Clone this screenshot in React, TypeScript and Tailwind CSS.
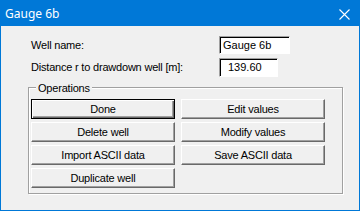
import * as React from "react";

const font = { fontFamily: '"Liberation Sans", Arial, sans-serif' };

function Btn({ label, isDefault = false }: { label: string; isDefault?: boolean }) {
  return (
    <button
      className={
        isDefault
          ? "h-[20px] border border-black bg-[#f0f0f0] text-[11px] tracking-[-0.2px] text-black shadow-[inset_1px_1px_0_#fff,inset_-1px_-1px_0_#696969,inset_-2px_-2px_0_#a0a0a0]"
          : "h-[20px] border border-t-white border-l-white border-r-[#696969] border-b-[#696969] bg-[#f0f0f0] text-[11px] tracking-[-0.2px] text-black shadow-[inset_-1px_-1px_0_#a0a0a0]"
      }
    >
      {label}
    </button>
  );
}

function Field({ value, width, height, indent }: { value: string; width: string; height: string; indent: string }) {
  return (
    <div
      className={`${width} ${height} ${indent} flex items-center border border-t-[#a0a0a0] border-l-[#a0a0a0] border-r-white border-b-white bg-white text-[11px] text-black shadow-[inset_1px_1px_0_#000]`}
    >
      {value}
    </div>
  );
}

export default function App() {
  return (
    <div className="h-[212px] w-[361px] bg-white" style={font}>
      <div className="flex h-[211px] w-[360px] flex-col border border-[#0078d7] bg-[#f0f0f0]">
        <div className="flex h-[25px] shrink-0 items-center justify-between bg-[#0078d7] pl-[4px] pr-[9px]">
          <span className="text-[12px] text-white" style={{ fontFamily: '"Noto Sans", "Open Sans", sans-serif' }}>
            Gauge 6b
          </span>
          <svg width="11" height="11" viewBox="0 0 11 11" className="mt-[1px]">
            <path d="M0.5 0.5 L10.5 10.5 M10.5 0.5 L0.5 10.5" stroke="#fff" strokeWidth="1.1" fill="none" />
          </svg>
        </div>

        <div className="flex flex-col pt-[10px] pl-[27px]">
          <div className="flex h-[18px] items-center">
            <span className="w-[191px] pl-[3px] text-[11px] tracking-[-0.2px] text-black">Well name:</span>
            <Field value="Gauge 6b" width="w-[71px]" height="h-[18px]" indent="pl-[3px]" />
          </div>
          <div className="mt-[4px] flex h-[19px] items-center">
            <span className="w-[191px] pl-[3px] text-[11px] tracking-[-0.2px] text-black">
              Distance r to drawdown well [m]:
            </span>
            <Field value="139.60" width="w-[59px]" height="h-[19px]" indent="pl-[8px]" />
          </div>

          <div className="relative mt-[10px] w-[315px] border border-[#a0a0a0] pt-[11px] pl-[2px] pb-[5px] shadow-[inset_1px_1px_0_#fff,1px_1px_0_#fff]">
            <span className="absolute -top-[8px] left-[7px] bg-[#f0f0f0] px-[2px] text-[11px] tracking-[-0.2px] text-black">
              Operations
            </span>
            <div className="grid w-[294px] grid-cols-2 gap-x-[6px] gap-y-[3px]">
              <Btn label="Done" isDefault />
              <Btn label="Edit values" />
              <Btn label="Delete well" />
              <Btn label="Modify values" />
              <Btn label="Import ASCII data" />
              <Btn label="Save ASCII data" />
              <Btn label="Duplicate well" />
            </div>
          </div>
        </div>
      </div>
    </div>
  );
}
